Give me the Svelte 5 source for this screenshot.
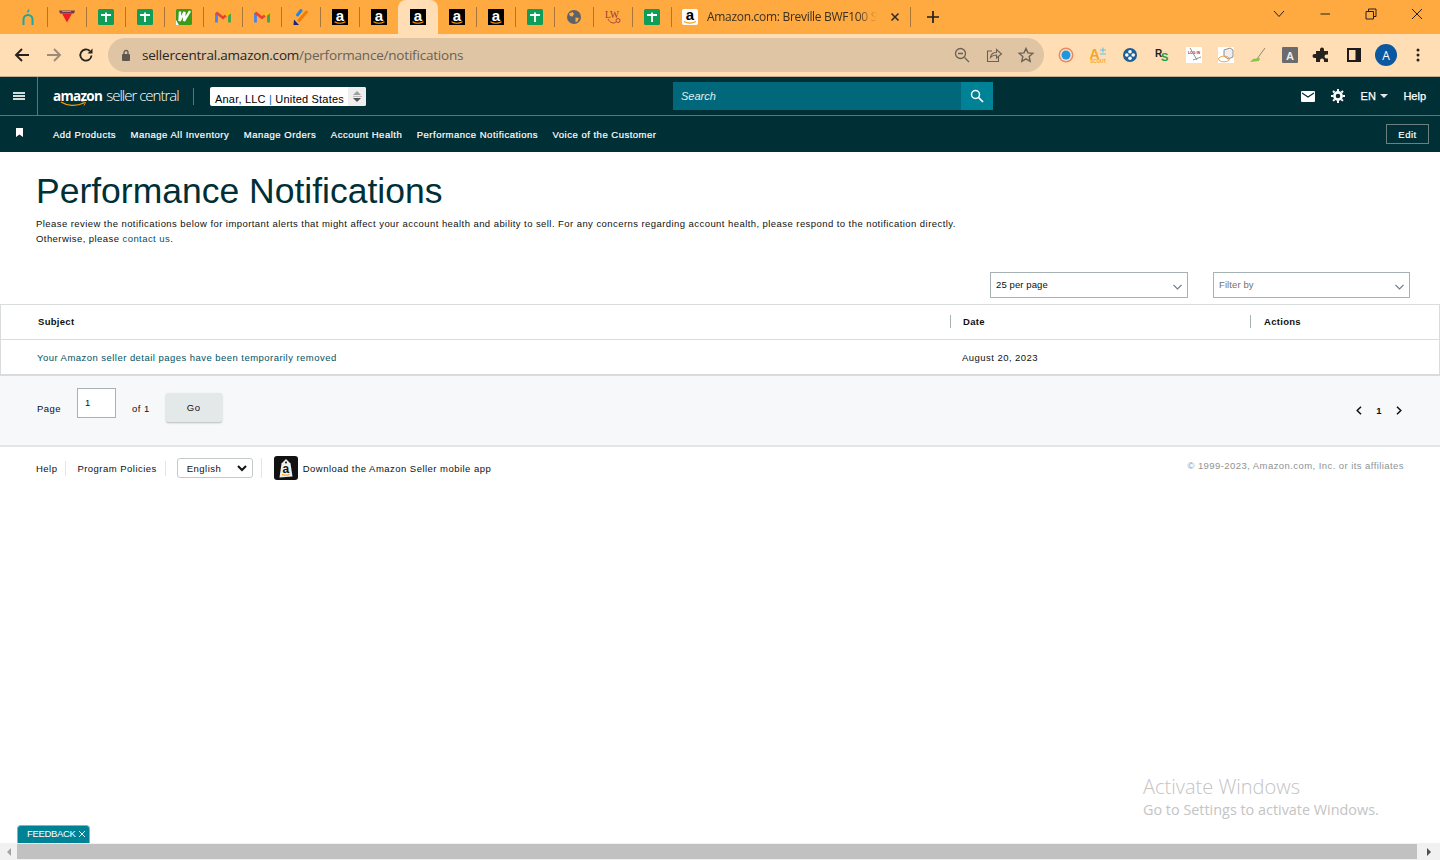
<script>
  const favicons = ['n', 'vee', 'sheet', 'sheet', 'w', 'gmail', 'gmail', 'pen', 'amz', 'amz', 'amz', 'amz', 'amz', 'sheet', 'globe', 'lw', 'sheet'];
  const activeIndex = 10;
  const extensions = ['ring', 'scout', 'dots', 'rs', 'login', 'box', 'broom', 'grey'];
  const navLinks = ['Add Products', 'Manage All Inventory', 'Manage Orders', 'Account Health', 'Performance Notifications', 'Voice of the Customer'];
</script>

{#snippet amazonIcon()}
  <svg width="16" height="16" viewBox="0 0 16 16">
    <rect width="16" height="16" fill="#000" />
    <text x="8" y="11.500" text-anchor="middle" class="amz-a">a</text>
    <path d="M2.500 12.800c3.200 1.800 7.500 1.800 11 0" fill="none" stroke="#f90" stroke-width="1.100" />
  </svg>
{/snippet}

{#snippet favicon(kind)}
  {#if kind === 'amz'}
    {@render amazonIcon()}
  {:else if kind === 'sheet'}
    <svg width="16" height="16" viewBox="0 0 16 16">
      <rect width="16" height="16" rx="1.500" fill="#0f9d58" />
      <path d="M3 6h10M8 3.500V13" stroke="#fff" stroke-width="1.800" />
    </svg>
  {:else if kind === 'n'}
    <svg width="16" height="16" viewBox="0 0 16 16">
      <path d="M3.500 16V10.500a4.500 4.500 0 0 1 9 0V16" fill="none" stroke="#1da5a5" stroke-width="2" />
      <path d="M9 .5 7.500 3.500" stroke="#1da5a5" stroke-width="1.600" />
    </svg>
  {:else if kind === 'vee'}
    <svg width="16" height="16" viewBox="0 0 16 16">
      <path d="M0 1.500h16l-1 3H1z" fill="#6b3a55" />
      <path d="M3 4.500h10L8 13.500z" fill="#ee1c25" />
      <path d="M3 2.500h9" stroke="#d69ab5" stroke-width=".8" />
    </svg>
  {:else if kind === 'w'}
    <svg width="16" height="16" viewBox="0 0 16 16">
      <rect width="16" height="16" rx="1.500" fill="#3c9b16" />
      <path d="M4 2.500 3.500 12 8.500 3 8 12 14 2" fill="none" stroke="#fff" stroke-width="2.400" />
      <path d="M0 16V11l3 5z" fill="#fff" />
    </svg>
  {:else if kind === 'gmail'}
    <svg width="16" height="16" viewBox="0 0 16 16">
      <path d="M1.500 13.500V4" stroke="#4285f4" stroke-width="2.800" />
      <path d="M14.500 13.500V4" stroke="#34a853" stroke-width="2.800" />
      <path d="M1.200 3.500 8 8.800l3-2.300" fill="none" stroke="#ea4335" stroke-width="2.800" />
      <path d="M11 6.500 15 3.500" stroke="#fbbc04" stroke-width="2.800" />
    </svg>
  {:else if kind === 'pen'}
    <svg width="16" height="16" viewBox="0 0 16 16">
      <path d="M8 1.500 4.500 6" stroke="#1e88e5" stroke-width="3" stroke-linecap="round" />
      <path d="M13.500 3 6 11.500" stroke="#f57c00" stroke-width="3" stroke-linecap="round" />
      <path d="M1 10.500 .5 16H6z" fill="#1a237e" />
    </svg>
  {:else if kind === 'globe'}
    <svg width="16" height="16" viewBox="0 0 16 16">
      <circle cx="8" cy="8" r="7" fill="#5f6368" />
      <path d="M3 4.500 6.500 3 8 5 6.500 7.500 4 7zM9.500 8.500 13 9 11.500 12.500 9.500 13z" fill="#ffaa40" />
    </svg>
  {:else if kind === 'lw'}
    <svg width="16" height="16" viewBox="0 0 16 16">
      <text x="0" y="9" class="lw-text">LW</text>
      <path d="M3 10c2 4 6 5 8 3M11 11.500a2 2 0 1 0 4 0 2 2 0 1 0-4 0" fill="none" stroke="#a8353c" stroke-width=".9" />
    </svg>
  {/if}
{/snippet}

{#snippet extension(kind)}
  {#if kind === 'ring'}
    <svg width="16" height="16" viewBox="0 0 16 16">
      <circle cx="8" cy="8" r="7.500" fill="#e98a5c" />
      <circle cx="8" cy="8" r="6" fill="#f4e3d0" />
      <circle cx="8" cy="8" r="4.500" fill="#1f96e0" />
    </svg>
  {:else if kind === 'scout'}
    <svg width="16" height="16" viewBox="0 0 16 16">
      <text x="-.5" y="11.500" class="scout-a">A</text>
      <path d="M10 3h6M13 .5v5M10 7h6" stroke="#5cc3ea" stroke-width="1.100" />
      <text x="8" y="16" text-anchor="middle" class="scout-sub">SCOUT</text>
    </svg>
  {:else if kind === 'dots'}
    <svg width="16" height="16" viewBox="0 0 16 16">
      <circle cx="8" cy="8" r="7" fill="#1c5f94" />
      <circle cx="8" cy="4.800" r="1.800" fill="#fff" />
      <circle cx="8" cy="11.200" r="1.800" fill="#fff" />
      <circle cx="4.800" cy="8" r="1.800" fill="#fff" />
      <circle cx="11.200" cy="8" r="1.800" fill="#fff" />
    </svg>
  {:else if kind === 'rs'}
    <svg width="16" height="16" viewBox="0 0 16 16">
      <text x="1" y="10" class="rs-r">R</text>
      <text x="7" y="14" class="rs-s">S</text>
    </svg>
  {:else if kind === 'login'}
    <svg width="16" height="16" viewBox="0 0 16 16">
      <rect width="16" height="16" fill="#fff" />
      <text x="8" y="7" text-anchor="middle" class="login-text">LOG IN</text>
      <path d="M4 1l7 12M7 13l8-3" stroke="#888" stroke-width=".9" fill="none" />
    </svg>
  {:else if kind === 'box'}
    <svg width="16" height="16" viewBox="0 0 16 16">
      <rect width="16" height="16" fill="#fff" />
      <path d="M6 3l6-2 3 2v7l-5 2-4-3z" fill="#eee" stroke="#777" stroke-width=".8" />
      <ellipse cx="6" cy="12" rx="5.500" ry="2.800" fill="none" stroke="#f09a3e" stroke-width=".9" />
    </svg>
  {:else if kind === 'broom'}
    <svg width="16" height="16" viewBox="0 0 16 16">
      <path d="M15 1 7 12" stroke="#8a8a7a" stroke-width="1" />
      <path d="M0 15l3-3 7-1-1 3z" fill="#8bc34a" />
    </svg>
  {:else if kind === 'grey'}
    <svg width="16" height="16" viewBox="0 0 16 16">
      <rect width="16" height="16" rx="1" fill="#6b6b6b" />
      <text x="8" y="12.500" text-anchor="middle" class="grey-a">A</text>
    </svg>
  {/if}
{/snippet}

<div class="page">
  <div class="tabstrip">
    {#each favicons as kind, i}
      <div class="tab" class:active={i === activeIndex} class:nosep={i === activeIndex || i === activeIndex - 1}>
        {@render favicon(kind)}
      </div>
    {/each}
    <div class="tab wide">
      <span class="white-fav">
        <svg width="16" height="16" viewBox="0 0 16 16">
          <rect width="16" height="16" rx="2" fill="#fff" />
          <text x="8" y="11" text-anchor="middle" class="amz-b">a</text>
          <path d="M2 12.500c3.500 2 8 2 12 0" fill="none" stroke="#f90" stroke-width="1.100" />
        </svg>
      </span>
      <span class="tab-title">Amazon.com: Breville BWF100 Si</span>
      <svg class="tab-close" width="10" height="10" viewBox="0 0 10 10">
        <path d="M1.500 1.500l7 7M8.500 1.500l-7 7" stroke="#2b2b2b" stroke-width="1.500" />
      </svg>
    </div>
    <svg class="newtab" width="14" height="14" viewBox="0 0 14 14">
      <path d="M7 1v12M1 7h12" stroke="#1f1f1f" stroke-width="1.700" />
    </svg>
    <div class="win-controls">
      <svg width="12" height="8" viewBox="0 0 12 8"><path d="M1 1l5 5.500L11 1" fill="none" stroke="#222" /></svg>
      <svg width="12" height="8" viewBox="0 0 12 8"><path d="M1.500 4h9.500" fill="none" stroke="#222" /></svg>
      <svg width="12" height="12" viewBox="0 0 12 12">
        <path d="M3.500 3V1H11v7.500H8.500M1 3.500h7.500V11H1z" fill="none" stroke="#222" />
      </svg>
      <svg width="12" height="12" viewBox="0 0 12 12"><path d="M1 1l10 10M11 1L1 11" stroke="#222" /></svg>
    </div>
  </div>

  <div class="toolbar">
    <div class="nav-buttons">
      <svg width="16" height="16" viewBox="0 0 16 16"><path d="M15 8H2M8 2 2 8l6 6" fill="none" stroke="#26221c" stroke-width="1.900" /></svg>
      <svg width="16" height="16" viewBox="0 0 16 16"><path d="M1 8h13M8 2l6 6-6 6" fill="none" stroke="#9c8b77" stroke-width="1.900" /></svg>
      <svg width="16" height="16" viewBox="0 0 16 16">
        <path d="M13.500 8.500A5.600 5.600 0 1 1 11.800 4" fill="none" stroke="#26221c" stroke-width="1.800" />
        <path d="M9.500 6.500H14.500V1.500z" fill="#26221c" />
      </svg>
    </div>
    <div class="omnibox">
      <svg class="lock" width="10" height="12" viewBox="0 0 10 12">
        <rect x="1" y="5" width="8" height="7" rx="1" fill="#5e574e" />
        <path d="M3 5V3.500a2 2 0 0 1 4 0V5" fill="none" stroke="#5e574e" stroke-width="1.300" />
      </svg>
      <span class="url"><span class="url-host">sellercentral.amazon.com</span>/performance/notifications</span>
      <div class="omni-actions">
        <svg width="16" height="16" viewBox="0 0 16 16">
          <circle cx="6.500" cy="6.500" r="5" fill="none" stroke="#6b6155" stroke-width="1.300" />
          <path d="M10.500 10.500l4.500 4.500M4 6.500h5" stroke="#6b6155" stroke-width="1.300" />
        </svg>
        <svg width="16" height="16" viewBox="0 0 16 16">
          <path d="M6 4H1.500v10.500h11V10" fill="none" stroke="#6b6155" stroke-width="1.100" />
          <path d="M4.500 10.500c.5-3.500 3-5 6-5V2.500l5 4.500-5 4V8c-2.500 0-4.500 .8-6 2.500z" fill="none" stroke="#6b6155" stroke-width="1.100" />
        </svg>
        <svg width="16" height="16" viewBox="0 0 16 16">
          <path d="M8 1.500l2 4.400 4.800 .5-3.600 3.200 1 4.700L8 11.900l-4.200 2.400 1-4.700L1.200 6.400 6 5.900z" fill="none" stroke="#6b6155" stroke-width="1.400" />
        </svg>
      </div>
    </div>
    <div class="extensions">
      {#each extensions as kind}
        <span class="ext">{@render extension(kind)}</span>
      {/each}
      <span class="ext">
        <svg width="16" height="16" viewBox="0 0 16 16">
          <path d="M6 2.500a2 2 0 0 1 4 0V4h4v3.500h-1.500a2 2 0 0 0 0 4H14V15H10v-1.500a2 2 0 0 0-4 0V15H2v-4H.5a2 2 0 0 1 0-4H2V4h4z" fill="#26221c" />
        </svg>
      </span>
      <span class="ext">
        <svg width="14" height="14" viewBox="0 0 14 14">
          <path d="M1 1h12v12H1z" fill="none" stroke="#1c1c1c" stroke-width="2" />
          <rect x="8.500" y="1" width="4.500" height="12" fill="#1c1c1c" />
        </svg>
      </span>
      <span class="avatar">A</span>
      <span class="ext">
        <svg width="4" height="14" viewBox="0 0 4 14">
          <circle cx="2" cy="2" r="1.500" fill="#26221c" />
          <circle cx="2" cy="7" r="1.500" fill="#26221c" />
          <circle cx="2" cy="12" r="1.500" fill="#26221c" />
        </svg>
      </span>
    </div>
  </div>

  <header class="sc-top">
    <div class="burger"><span></span><span></span><span></span></div>
    <div class="logo">
      <span class="logo-amazon">amazon</span><span class="logo-seller">seller central</span>
      <svg class="smile" width="28" height="6" viewBox="0 0 28 6">
        <path d="M1 1c6 4 15 4.500 23 1" fill="none" stroke="#f90" stroke-width="1.300" />
        <path d="M21.500 .5l4 1-1.500 3" fill="none" stroke="#f90" stroke-width=".9" />
      </svg>
    </div>
    <div class="account-picker">
      <span class="account-name">Anar, LLC <span class="pipe">|</span> United States</span>
      <span class="spinner"><i class="up"></i><i class="rule"></i><i class="down"></i></span>
    </div>
    <div class="search">
      <span class="search-field">Search</span>
      <span class="search-btn">
        <svg width="14" height="14" viewBox="0 0 14 14">
          <circle cx="5.500" cy="5.500" r="4" fill="none" stroke="#fff" stroke-width="1.500" />
          <path d="M8.500 8.500l4.500 4.500" stroke="#fff" stroke-width="1.700" />
        </svg>
      </span>
    </div>
    <div class="top-right">
      <svg width="14" height="11" viewBox="0 0 14 11">
        <rect width="14" height="11" rx="1" fill="#fff" />
        <path d="M1 2l6 4 6-4" fill="none" stroke="#002f36" stroke-width="1.200" />
      </svg>
      <svg class="gear" width="14" height="14" viewBox="0 0 14 14">
        <circle cx="7" cy="7" r="3.600" fill="none" stroke="#fff" stroke-width="2.600" />
        <path d="M7 0v14M0 7h14M2 2l10 10M12 2 2 12" stroke="#fff" stroke-width="2" stroke-dasharray="2.200 9.600 2.200" />
      </svg>
      <span class="lang">EN<i class="caret"></i></span>
      <span class="help">Help</span>
    </div>
  </header>

  <nav class="sc-nav">
    <svg class="bookmark" width="7" height="9" viewBox="0 0 7 9"><path d="M0 0h7v9L3.500 6.500 0 9z" fill="#fff" /></svg>
    <div class="nav-links">
      {#each navLinks as link}
        <span>{link}</span>
      {/each}
    </div>
    <span class="edit-btn">Edit</span>
  </nav>

  <main class="content">
    <h1>Performance Notifications</h1>
    <p class="intro">
      Please review the notifications below for important alerts that might affect your account health and ability to sell. For any concerns regarding account health, please respond to the notification directly.<br />
      Otherwise, please <span class="link">contact us</span>.
    </p>
    <div class="filters">
      <div class="dropdown per-page">
        <span>25 per page</span>
        <svg width="9" height="6" viewBox="0 0 9 6"><path d="M.5 1l4 4 4-4" fill="none" stroke="#6f7f82" stroke-width="1.100" /></svg>
      </div>
      <div class="dropdown filter-by">
        <span class="placeholder">Filter by</span>
        <svg width="9" height="6" viewBox="0 0 9 6"><path d="M.5 1l4 4 4-4" fill="none" stroke="#6f7f82" stroke-width="1.100" /></svg>
      </div>
    </div>

    <div class="table">
      <div class="row head">
        <div class="cell subject">Subject</div>
        <div class="cell date">Date</div>
        <div class="cell actions">Actions</div>
      </div>
      <div class="row body">
        <div class="cell subject link">Your Amazon seller detail pages have been temporarily removed</div>
        <div class="cell date">August 20, 2023</div>
        <div class="cell actions"></div>
      </div>
    </div>

    <div class="pager">
      <span class="pager-text">Page</span>
      <span class="page-input">1</span>
      <span class="pager-text of">of 1</span>
      <span class="go">Go</span>
      <div class="pager-right">
        <svg width="6" height="9" viewBox="0 0 6 9"><path d="M5 .8 1.200 4.500 5 8.200" fill="none" stroke="#111" stroke-width="1.500" /></svg>
        <b>1</b>
        <svg width="6" height="9" viewBox="0 0 6 9"><path d="M1 .8l3.800 3.700L1 8.200" fill="none" stroke="#111" stroke-width="1.500" /></svg>
      </div>
    </div>

    <footer class="foot">
      <span class="foot-link first">Help</span>
      <span class="foot-link">Program Policies</span>
      <div class="foot-lang">
        <span class="lang-box">English
          <svg width="10" height="7" viewBox="0 0 10 7"><path d="M1 1l4 4 4-4" fill="none" stroke="#111" stroke-width="2" /></svg>
        </span>
      </div>
      <div class="foot-app">
        <svg width="24" height="24" viewBox="0 0 24 24">
          <rect width="24" height="24" rx="3" fill="#111" />
          <path d="M7.500 7.500 12 3l4.500 4.500 2 13-13 1z" fill="#eee" />
          <circle cx="12" cy="6.500" r="1" fill="#111" />
          <text x="12" y="17" text-anchor="middle" class="tag-a">a</text>
          <path d="M8 18.500c2.500 1 5 1 7.500 0" fill="none" stroke="#f90" stroke-width="1" />
        </svg>
        <span>Download the Amazon Seller mobile app</span>
      </div>
      <span class="copyright">© 1999-2023, Amazon.com, Inc. or its affiliates</span>
    </footer>
  </main>

  <div class="watermark">
    <div class="wm-title">Activate Windows</div>
    <div class="wm-sub">Go to Settings to activate Windows.</div>
  </div>

  <div class="feedback">FEEDBACK
    <svg width="8" height="8" viewBox="0 0 8 8"><path d="M1 1l6 6M7 1 1 7" stroke="#fff" stroke-width=".9" /></svg>
  </div>

  <div class="scrollbar">
    <span class="arrow left"></span>
    <span class="thumb"></span>
    <span class="arrow right"></span>
  </div>
</div>

<style>
  :global(body) {
    margin: 0;
    background: #fff;
  }
  .page {
    position: relative;
    width: 1440px;
    height: 860px;
    overflow: hidden;
    display: flex;
    flex-direction: column;
    font-family: 'Liberation Sans', Arial, sans-serif;
    color: #0f1111;
  }
  svg {
    overflow: visible;
  }

  /* browser chrome */
  .tabstrip {
    height: 34px;
    background: #ffaa40;
    display: flex;
    padding-left: 8px;
    align-items: stretch;
    flex: none;
    position: relative;
  }
  .tab {
    width: 39px;
    display: flex;
    align-items: center;
    justify-content: center;
    position: relative;
  }
  .tab::after {
    content: '';
    position: absolute;
    right: -1px;
    top: 7px;
    height: 20px;
    width: 1px;
    background: #a8763a;
  }
  .tab.nosep::after {
    display: none;
  }
  .tab.active {
    background: #ffdeb5;
    border-radius: 8px 8px 0 0;
    width: 40px;
    margin-right: -1px;
  }
  .tab.wide {
    width: 239px;
    justify-content: flex-start;
    padding-left: 11px;
    box-sizing: border-box;
    gap: 9px;
  }
  .white-fav {
    display: flex;
  }
  .tab-title {
    width: 170px;
    flex: none;
    white-space: nowrap;
    overflow: hidden;
    font-family: 'Open Sans', sans-serif;
    font-size: 12px;
    letter-spacing: -.3px;
    padding-bottom: 2px;
    color: #3a2f20;
    -webkit-mask-image: linear-gradient(to right, #000 150px, transparent 170px);
    mask-image: linear-gradient(to right, #000 150px, transparent 170px);
  }
  .tab-close {
    margin-left: 4px;
  }
  .newtab {
    align-self: center;
    margin-left: 16px;
  }
  .win-controls {
    margin-left: auto;
    display: flex;
    align-items: center;
    gap: 34px;
    height: 28px;
    padding-right: 17px;
  }
  .toolbar {
    height: 43px;
    box-sizing: border-box;
    background: #ffdeb5;
    border-bottom: 1px solid #c4ad8e;
    display: flex;
    align-items: flex-start;
    padding-top: 4px;
    flex: none;
  }
  .nav-buttons {
    width: 108px;
    height: 34px;
    display: flex;
    align-items: center;
    gap: 16px;
    padding-left: 14px;
    box-sizing: border-box;
  }
  .omnibox {
    width: 936px;
    height: 34px;
    background: #dfc5a3;
    border-radius: 17px;
    display: flex;
    align-items: center;
    box-sizing: border-box;
    padding-left: 13px;
  }
  .lock {
    margin-right: 11px;
  }
  .url {
    font-family: 'Open Sans', sans-serif;
    font-size: 13.500px;
    letter-spacing: -.2px;
    color: #6b6155;
    white-space: nowrap;
  }
  .url-host {
    color: #2a2620;
  }
  .omni-actions {
    margin-left: auto;
    display: flex;
    gap: 16px;
    padding-right: 10px;
  }
  .extensions {
    display: flex;
    align-items: center;
    height: 34px;
    padding-left: 6px;
  }
  .ext {
    width: 32px;
    display: flex;
    justify-content: center;
    align-items: center;
  }
  .avatar {
    width: 22px;
    height: 22px;
    margin: 0 5px;
    border-radius: 50%;
    background: #0b57a0;
    color: #fff;
    font-family: 'Open Sans', sans-serif;
    font-size: 12px;
    display: flex;
    align-items: center;
    justify-content: center;
  }
  .amz-a, .amz-b {
    font: bold 15px 'Liberation Sans', sans-serif;
    fill: #fff;
  }
  .amz-b {
    fill: #000;
  }
  .lw-text {
    font: 9.500px 'Liberation Serif', serif;
    fill: #9c2f3a;
  }
  .scout-a {
    font: bold 14px 'Liberation Sans', sans-serif;
    fill: #f5a623;
  }
  .scout-sub {
    font: bold 4.500px 'Liberation Sans', sans-serif;
    fill: #f5a623;
  }
  .rs-r {
    font: bold 10px 'Liberation Sans', sans-serif;
    fill: #222;
  }
  .rs-s {
    font: bold 11px 'Liberation Sans', sans-serif;
    fill: #1b9e4b;
  }
  .login-text {
    font: bold 3.500px 'Liberation Sans', sans-serif;
    fill: #8b2b3a;
  }
  .grey-a {
    font: bold 11px 'Liberation Sans', sans-serif;
    fill: #eee;
  }
  .tag-a {
    font: bold 12px 'Liberation Sans', sans-serif;
    fill: #111;
  }

  /* seller central header */
  .sc-top {
    height: 39px;
    box-sizing: border-box;
    background: #002f36;
    border-bottom: 1px solid #5c7377;
    display: flex;
    align-items: center;
    flex: none;
  }
  .burger {
    width: 37px;
    height: 38px;
    border-right: 1px solid #5c7377;
    display: flex;
    flex-direction: column;
    justify-content: center;
    align-items: center;
    gap: 1.500px;
    flex: none;
  }
  .burger span {
    width: 12px;
    height: 1.500px;
    background: #d5dcdc;
  }
  .logo {
    position: relative;
    margin-left: 15px;
    width: 140px;
    border-right: 1px solid #5c7377;
    height: 17px;
    color: #fff;
    white-space: nowrap;
    flex: none;
    display: flex;
    align-items: baseline;
    line-height: 14px;
  }
  .logo-amazon {
    font: bold 13.500px/14px 'Open Sans', sans-serif;
    letter-spacing: -.7px;
  }
  .logo-seller {
    font: 300 15px/14px 'Open Sans', sans-serif;
    letter-spacing: -1px;
    margin-left: 4px;
    color: #fff;
  }
  .smile {
    position: absolute;
    left: 7px;
    top: 13px;
  }
  .account-picker {
    margin-left: 16px;
    width: 156px;
    height: 19px;
    box-sizing: border-box;
    background: #fff;
    border-radius: 2px;
    display: flex;
    align-items: center;
    padding-left: 5px;
    flex: none;
  }
  .account-name {
    font-size: 11px;
    color: #000;
    padding-top: 5px;
    letter-spacing: .2px;
    white-space: nowrap;
  }
  .pipe {
    color: #0066c0;
  }
  .spinner {
    margin-left: auto;
    width: 18px;
    height: 100%;
    background: #eee;
    border-radius: 0 2px 2px 0;
    display: flex;
    flex-direction: column;
    align-items: center;
    justify-content: center;
    gap: 1px;
  }
  .spinner i {
    display: block;
  }
  .spinner .up {
    border: 4px solid transparent;
    border-top: 0;
    border-bottom: 4px solid #a0a0a0;
  }
  .spinner .rule {
    width: 9px;
    height: 1px;
    background: #bbb;
  }
  .spinner .down {
    border: 4px solid transparent;
    border-bottom: 0;
    border-top: 4px solid #555;
  }
  .search {
    margin-left: 307px;
    display: flex;
    height: 28px;
    width: 320px;
    flex: none;
  }
  .search-field {
    flex: 1;
    background: #00687a;
    color: #e4eeee;
    font-size: 11px;
    font-style: italic;
    display: flex;
    align-items: center;
    padding-left: 8px;
  }
  .search-btn {
    width: 32px;
    background: #008296;
    display: flex;
    align-items: center;
    justify-content: center;
  }
  .top-right {
    margin-left: auto;
    padding-right: 14px;
    display: flex;
    align-items: center;
    color: #fff;
    font-size: 11px;
    -webkit-text-stroke: .25px #fff;
  }
  .gear {
    margin-left: 16px;
  }
  .lang {
    margin-left: 15px;
    display: flex;
    align-items: center;
    letter-spacing: .3px;
  }
  .caret {
    margin-left: 4px;
    border: 4px solid transparent;
    border-bottom: 0;
    border-top: 4px solid #dfe5e5;
  }
  .help {
    margin-left: 15px;
  }
  .sc-nav {
    height: 36px;
    box-sizing: border-box;
    background: #002f36;
    display: flex;
    align-items: center;
    padding-left: 16px;
    padding-right: 11px;
    flex: none;
  }
  .bookmark {
    margin-right: 30px;
    margin-top: -3px;
  }
  .nav-links {
    display: flex;
    gap: 14.500px;
    color: #fff;
    font-size: 9.500px;
    letter-spacing: .5px;
    -webkit-text-stroke: .2px #fff;
  }
  .edit-btn {
    margin-left: auto;
    width: 43px;
    height: 20px;
    box-sizing: border-box;
    border: 1px solid #6c7f82;
    color: #fff;
    font-size: 9.500px;
    letter-spacing: .5px;
    -webkit-text-stroke: .2px #fff;
    display: flex;
    align-items: center;
    justify-content: center;
  }

  /* page */
  .content {
    flex: 1;
    display: flex;
    flex-direction: column;
  }
  h1 {
    margin: 21px 0 0 36px;
    font-size: 35.500px;
    line-height: 36px;
    font-weight: 400;
    color: #002f36;
  }
  .intro {
    margin: 7px 0 0 36px;
    font-size: 9.500px;
    line-height: 15px;
    letter-spacing: .434px;
    color: #0f1111;
    white-space: nowrap;
  }
  .link {
    color: #00535f;
  }
  .filters {
    margin-top: 26px;
    display: flex;
    justify-content: flex-end;
    gap: 25px;
    padding-right: 30px;
  }
  .dropdown {
    height: 26px;
    box-sizing: border-box;
    border: 1px solid #a6b2b4;
    display: flex;
    align-items: center;
    justify-content: space-between;
    padding: 0 5px 2px;
    font-size: 9.500px;
    letter-spacing: .1px;
  }
  .dropdown svg {
    margin-top: 5px;
  }
  .per-page {
    width: 198px;
  }
  .filter-by {
    width: 197px;
  }
  .placeholder {
    color: #6f7373;
  }
  .table {
    margin-top: 6px;
    border: 1px solid #d9dcdc;
    border-bottom-width: 2px;
    background: #fff;
  }
  .row {
    display: grid;
    grid-template-columns: 949px 300px 1fr;
    align-items: center;
    font-size: 9.500px;
    letter-spacing: .46px;
  }
  .row.head {
    height: 35px;
    box-sizing: border-box;
    border-bottom: 1px solid #d9dcdc;
    padding-bottom: 1px;
    font-weight: bold;
    letter-spacing: .3px;
  }
  .row.body {
    height: 34px;
  }
  .cell {
    padding-left: 13px;
  }
  .row.body .cell.subject {
    padding-left: 36px;
  }
  .row.head .cell.subject {
    padding-left: 37px;
  }
  .row.head .cell.date, .row.head .cell.actions {
    border-left: 1px solid #a6b2b4;
    height: 13px;
    line-height: 13px;
  }
  .row.head .cell.date {
    padding-left: 12px;
  }
  .row.body .cell.date {
    padding-left: 12px;
  }
  .pager {
    height: 71px;
    box-sizing: border-box;
    background: #f7f8fa;
    border-bottom: 2px solid #e3e6e6;
    display: flex;
    align-items: flex-start;
    padding: 12px 38px 0 37px;
    font-size: 9.500px;
    letter-spacing: .45px;
  }
  .pager-text {
    margin-top: 15px;
  }
  .page-input {
    margin-left: 16px;
    width: 39px;
    height: 30px;
    box-sizing: border-box;
    background: #fff;
    border: 1px solid #a6b2b4;
    padding: 8px 0 0 7px;
  }
  .of {
    margin-left: 16px;
  }
  .go {
    margin: 5px 0 0 16px;
    width: 56px;
    height: 29px;
    background: #e3e9e9;
    border-radius: 2px;
    box-shadow: 0 1px 2px rgba(0, 0, 0, .25);
    display: flex;
    align-items: center;
    justify-content: center;
  }
  .pager-right {
    margin: 17px 0 0 auto;
    display: flex;
    align-items: center;
    gap: 14px;
  }
  .foot {
    display: flex;
    align-items: center;
    padding: 9px 36px 0 36px;
    height: 24px;
    font-size: 9.500px;
    letter-spacing: .47px;
  }
  .foot-link {
    padding: 0 8px 0 11px;
    border-right: 1px solid #e3e6e6;
    line-height: 15px;
  }
  .foot-link.first {
    padding-left: 0;
  }
  .foot-lang {
    padding: 0 8px 0 0;
    border-right: 1px solid #e3e6e6;
    margin-left: 11px;
  }
  .lang-box {
    width: 76px;
    height: 20px;
    box-sizing: border-box;
    border: 1px solid #c4c9c9;
    border-radius: 3px;
    display: flex;
    align-items: center;
    justify-content: space-between;
    padding: 0 5px 0 9px;
  }
  .foot-app {
    margin-left: 12px;
    display: flex;
    align-items: center;
    gap: 5px;
  }
  .copyright {
    margin-left: auto;
    color: #8e9494;
    margin-top: -6px;
    letter-spacing: .43px;
  }

  /* overlays */
  .watermark {
    position: absolute;
    left: 1143px;
    top: 774px;
    font-family: 'Open Sans', sans-serif;
    color: #c4c4c4;
    font-weight: 300;
  }
  .wm-title {
    font-size: 20px;
    line-height: 26px;
  }
  .wm-sub {
    font-size: 14.400px;
    line-height: 20px;
    font-weight: 400;
  }
  .feedback {
    position: absolute;
    left: 17px;
    top: 825px;
    width: 73px;
    height: 18px;
    box-sizing: border-box;
    background: #008296;
    border: 1px solid #7fb8c2;
    border-bottom: 0;
    border-radius: 4px 4px 0 0;
    color: #fff;
    font-size: 9.500px;
    letter-spacing: -.35px;
    display: flex;
    align-items: center;
    padding: 0 0 2px 9px;
    gap: 3px;
  }
  .scrollbar {
    position: absolute;
    left: 0;
    right: 0;
    bottom: 0;
    height: 17px;
    background: #f1f1f1;
    display: flex;
    align-items: center;
  }
  .thumb {
    flex: 1;
    height: 15px;
    background: #c1c1c1;
  }
  .arrow {
    width: 17px;
    display: flex;
    justify-content: center;
  }
  .arrow::before {
    content: '';
    border: 4px solid transparent;
  }
  .arrow.left::before {
    border-left: 0;
    border-right: 4px solid #a3a3a3;
  }
  .arrow.right {
    width: 23px;
  }
  .arrow.right::before {
    border-right: 0;
    border-left: 4px solid #505050;
  }
</style>
